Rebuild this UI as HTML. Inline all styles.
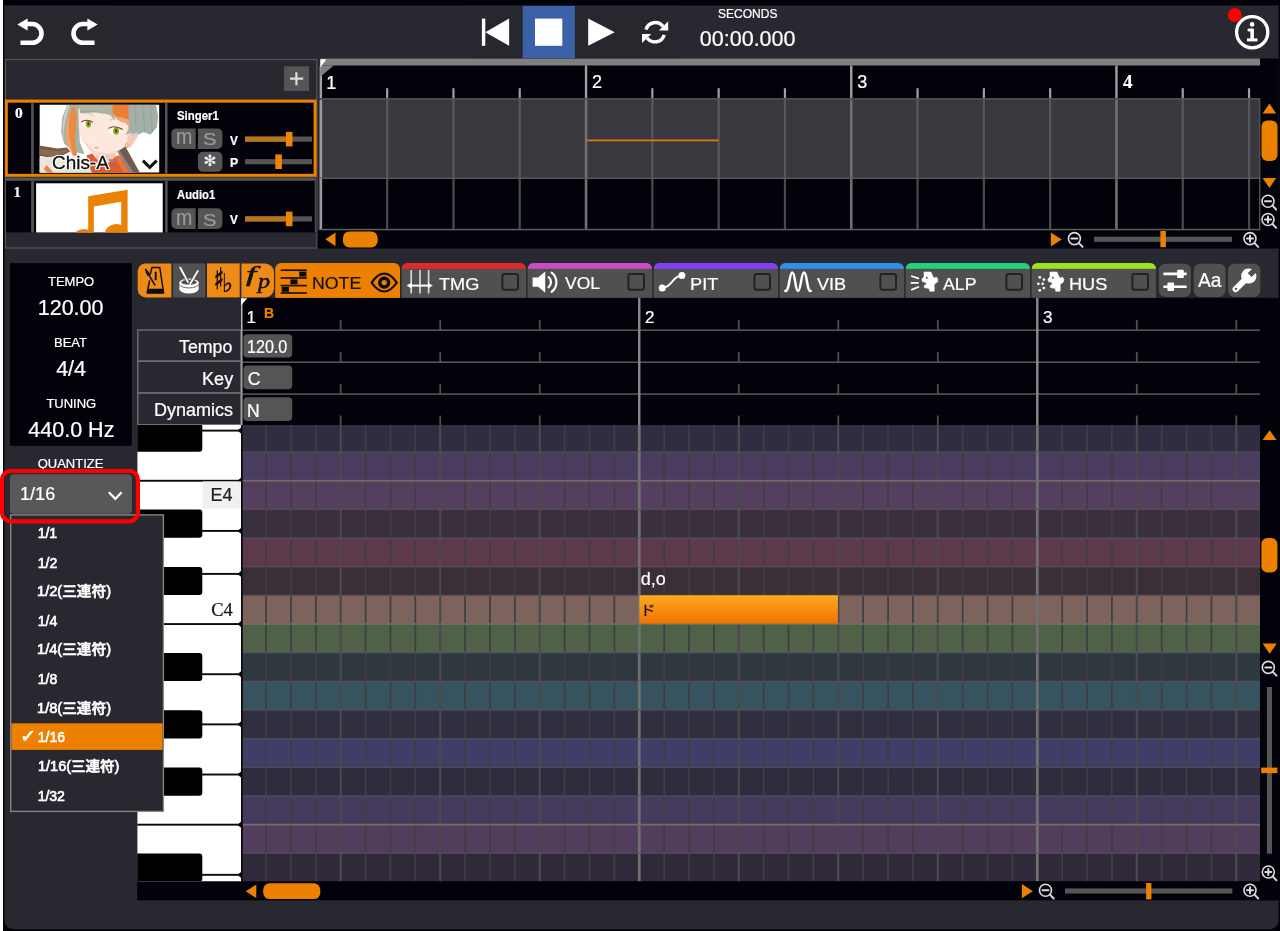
<!DOCTYPE html>
<html lang="ja"><head><meta charset="utf-8"><title>Vocal editor – Quantize menu</title>
<style>
html,body{margin:0;padding:0}
body{width:1280px;height:931px;position:relative;overflow:hidden;background:#02020b;font-family:"Liberation Sans", "Noto Sans CJK JP", sans-serif;}
#base{position:absolute;left:0;top:0}
header,section,#quantize-menu{position:absolute;overflow:visible;will-change:transform}
svg.g{position:absolute;left:0;top:0;overflow:visible}
.f-serif{font-family:"Liberation Serif", "Noto Serif CJK SC", serif}
.f-serifi{font-family:"Liberation Serif", serif;font-style:italic;-webkit-text-stroke:0.4px #111}
.f-dv{font-family:"DejaVu Sans", sans-serif}
.f-serifbi{font-family:"Liberation Serif", serif;font-style:italic;font-weight:700}
.t{position:absolute;white-space:nowrap;transform-origin:0 0;display:block;-webkit-text-stroke:0.22px currentColor}
.mi{-webkit-text-stroke:0.65px #fff}
#focus-ring{position:absolute;left:-2px;top:465px;width:146px;height:62px}
</style></head>
<body>
<svg id="base" width="1280" height="931" viewBox="0 0 1280 931"><rect x="0.00" y="0.00" width="1280.00" height="931.00" fill="#02020b"/><rect x="0.00" y="0.00" width="3.00" height="931.00" fill="#ffffff"/><path d="M4.50 5.50H1278.70V920.20A9 9 0 0 1 1269.70 929.20H13.50A9 9 0 0 1 4.50 920.20V5.50Z" fill="#282830"/></svg>
<header id="toolbar" style="left:0px;top:0px;width:1280px;height:59px">
<svg class="g" width="1280" height="59" viewBox="0 0 1280 59"><rect x="4.50" y="5.50" width="104.50" height="53.00" fill="#27272e"/><rect x="470.60" y="5.50" width="209.00" height="53.00" fill="#27272e"/><path d="M27 24H32.1A9.4 9.4 0 0 1 32.1 42.8H20.5" fill="none" stroke="#fff" stroke-width="4.6"/><path d="M17.3 24.6L27.6 18.6V30.6Z" fill="#fff"/><g transform="translate(115 0) scale(-1 1)"><path d="M27 24H32.1A9.4 9.4 0 0 1 32.1 42.8H20.5" fill="none" stroke="#fff" stroke-width="4.6"/><path d="M17.3 24.6L27.6 18.6V30.6Z" fill="#fff"/></g><rect x="522.70" y="6.00" width="52.20" height="52.50" fill="#3b61a9"/><rect x="481.90" y="18.60" width="3.40" height="27.20" fill="#fff"/><path d="M485.3 32.2L509.1 18.6V45.8Z" fill="#fff"/><rect x="535.00" y="18.60" width="27.30" height="27.20" fill="#fff"/><path d="M588.2 18.6V45.8L614.7 32.2Z" fill="#fff"/><g transform="translate(655 32.2) scale(0.95 0.93) translate(-655 -32.3)"><g fill="none" stroke="#fff" stroke-width="3.7"><path d="M645.6 29.5A10 10 0 0 1 663.5 26.2"/><path d="M664.6 35.1A10 10 0 0 1 646.7 38.4"/></g><path d="M668.9 20.6V30.4H659.1Z" fill="#fff"/><path d="M641.3 44V34.2H651.1Z" fill="#fff"/></g><circle cx="1252.2" cy="32.2" r="15.6" fill="none" stroke="#fff" stroke-width="3.3"/><circle cx="1252.1" cy="24.4" r="2.3" fill="#fff"/><rect x="1250.40" y="28.60" width="3.50" height="12.40" fill="#fff"/><rect x="1247.60" y="28.60" width="4.40" height="2.80" fill="#fff"/><rect x="1247.00" y="38.40" width="10.50" height="3.00" fill="#fff"/><circle cx="1234.8" cy="15" r="7" fill="#ff0000"/></svg>
<span class="t lbl" style="left:718.08px;top:8.24px;font-size:12px;line-height:12px;height:12px;color:#fff;">SECONDS</span>
<span class="t" style="left:699.83px;top:29.01px;font-size:21.5px;line-height:21.5px;height:21.5px;color:#fff;">00:00.000</span>
</header>
<section id="song" style="left:0px;top:59px;width:1280px;height:190px">
<svg class="g" width="1280" height="190" viewBox="0 59 1280 190"><rect x="320.30" y="58.50" width="958.40" height="189.80" fill="#02020b"/><rect x="316.90" y="230.20" width="961.80" height="18.10" fill="#02020b"/><rect x="320.30" y="58.50" width="939.70" height="7.00" fill="#808080"/><rect x="320.30" y="99.60" width="939.70" height="77.70" fill="#38383e"/><rect x="319.65" y="65.50" width="2.40" height="32.70" fill="#a0a0a0"/><rect x="319.55" y="99.60" width="2.60" height="130.40" fill="#9a9a9a"/><rect x="386.05" y="88.20" width="2.20" height="10.00" fill="#a0a0a0"/><rect x="386.05" y="99.60" width="2.20" height="77.70" fill="#58585c"/><rect x="386.05" y="177.30" width="2.20" height="52.70" fill="#4a4a4c"/><rect x="452.35" y="88.20" width="2.20" height="10.00" fill="#a0a0a0"/><rect x="452.35" y="99.60" width="2.20" height="77.70" fill="#58585c"/><rect x="452.35" y="177.30" width="2.20" height="52.70" fill="#4a4a4c"/><rect x="518.65" y="88.20" width="2.20" height="10.00" fill="#a0a0a0"/><rect x="518.65" y="99.60" width="2.20" height="77.70" fill="#58585c"/><rect x="518.65" y="177.30" width="2.20" height="52.70" fill="#4a4a4c"/><rect x="584.85" y="65.50" width="2.40" height="32.70" fill="#a0a0a0"/><rect x="584.75" y="99.60" width="2.60" height="130.40" fill="#707070"/><rect x="651.25" y="88.20" width="2.20" height="10.00" fill="#a0a0a0"/><rect x="651.25" y="99.60" width="2.20" height="77.70" fill="#58585c"/><rect x="651.25" y="177.30" width="2.20" height="52.70" fill="#4a4a4c"/><rect x="717.55" y="88.20" width="2.20" height="10.00" fill="#a0a0a0"/><rect x="717.55" y="99.60" width="2.20" height="77.70" fill="#58585c"/><rect x="717.55" y="177.30" width="2.20" height="52.70" fill="#4a4a4c"/><rect x="783.85" y="88.20" width="2.20" height="10.00" fill="#a0a0a0"/><rect x="783.85" y="99.60" width="2.20" height="77.70" fill="#58585c"/><rect x="783.85" y="177.30" width="2.20" height="52.70" fill="#4a4a4c"/><rect x="850.05" y="65.50" width="2.40" height="32.70" fill="#a0a0a0"/><rect x="849.95" y="99.60" width="2.60" height="130.40" fill="#707070"/><rect x="916.45" y="88.20" width="2.20" height="10.00" fill="#a0a0a0"/><rect x="916.45" y="99.60" width="2.20" height="77.70" fill="#58585c"/><rect x="916.45" y="177.30" width="2.20" height="52.70" fill="#4a4a4c"/><rect x="982.75" y="88.20" width="2.20" height="10.00" fill="#a0a0a0"/><rect x="982.75" y="99.60" width="2.20" height="77.70" fill="#58585c"/><rect x="982.75" y="177.30" width="2.20" height="52.70" fill="#4a4a4c"/><rect x="1049.05" y="88.20" width="2.20" height="10.00" fill="#a0a0a0"/><rect x="1049.05" y="99.60" width="2.20" height="77.70" fill="#58585c"/><rect x="1049.05" y="177.30" width="2.20" height="52.70" fill="#4a4a4c"/><rect x="1115.25" y="65.50" width="2.40" height="32.70" fill="#a0a0a0"/><rect x="1115.15" y="99.60" width="2.60" height="130.40" fill="#707070"/><rect x="1181.65" y="88.20" width="2.20" height="10.00" fill="#a0a0a0"/><rect x="1181.65" y="99.60" width="2.20" height="77.70" fill="#58585c"/><rect x="1181.65" y="177.30" width="2.20" height="52.70" fill="#4a4a4c"/><rect x="1247.95" y="88.20" width="2.20" height="10.00" fill="#a0a0a0"/><rect x="1247.95" y="99.60" width="2.20" height="77.70" fill="#58585c"/><rect x="1247.95" y="177.30" width="2.20" height="52.70" fill="#4a4a4c"/><rect x="1259.00" y="99.60" width="1.40" height="130.40" fill="#505052"/><rect x="320.30" y="98.20" width="940.10" height="1.50" fill="#606060"/><rect x="320.30" y="177.30" width="940.10" height="1.60" fill="#606060"/><rect x="320.30" y="228.80" width="940.10" height="1.50" fill="#606060"/><path d="M320.3 65.5H333.8L320.3 76.8Z" fill="#808080"/><path d="M320.3 59.2H326.4L320.3 67.6Z" fill="#fff"/><rect x="586.60" y="139.50" width="131.90" height="1.80" fill="#d87a10"/><path d="M1262.6 113.6L1269.4 103.6L1276.2 113.6Z" fill="#ee8000"/><rect x="1261.50" y="120.60" width="16.00" height="40.40" rx="6" fill="#ee8000"/><path d="M1262.6 178L1276.2 178L1269.4 188Z" fill="#ee8000"/><g stroke="#dcdcdc" fill="none" stroke-linecap="round"><circle cx="1268" cy="201.2" r="6.0" stroke-width="1.6"/><path d="M1272.50 205.70L1276.20 209.50" stroke-width="1.9"/><path d="M1265.00 201.2H1271.00" stroke-width="2"/></g><g stroke="#dcdcdc" fill="none" stroke-linecap="round"><circle cx="1268" cy="219.5" r="6.0" stroke-width="1.6"/><path d="M1272.50 224.00L1276.20 227.80" stroke-width="1.9"/><path d="M1265.00 219.5H1271.00" stroke-width="2"/><path d="M1268 216.50V222.50" stroke-width="2"/></g><path d="M335.5 232.4V246.3L325.3 239.35Z" fill="#ee8000"/><rect x="342.90" y="231.40" width="34.80" height="16.00" rx="6.5" fill="#ee8000"/><path d="M1050.8 232.6V246.4L1061.7 239.5Z" fill="#ee8000"/><g stroke="#dcdcdc" fill="none" stroke-linecap="round"><circle cx="1074.4" cy="238.6" r="6.0" stroke-width="1.6"/><path d="M1078.90 243.10L1082.60 246.90" stroke-width="1.9"/><path d="M1071.40 238.6H1077.40" stroke-width="2"/></g><rect x="1094.00" y="236.70" width="138.00" height="5.20" fill="#555"/><rect x="1160.40" y="231.00" width="5.50" height="16.20" fill="#ee8000"/><g stroke="#dcdcdc" fill="none" stroke-linecap="round"><circle cx="1250" cy="238.6" r="6.0" stroke-width="1.6"/><path d="M1254.50 243.10L1258.20 246.90" stroke-width="1.9"/><path d="M1247.00 238.6H1253.00" stroke-width="2"/><path d="M1250 235.60V241.60" stroke-width="2"/></g><rect x="5.50" y="59.50" width="311.30" height="188.50" fill="#282830" stroke="#555" stroke-width="1.2"/><rect x="284.00" y="66.30" width="25.00" height="24.60" fill="#555"/><path d="M290 78.6H303.2M296.4 72.2V85.2" stroke="#dcdcdc" stroke-width="2.2" fill="none"/><rect x="5.00" y="99.60" width="311.60" height="77.20" fill="#ee8000"/><rect x="7.80" y="102.70" width="305.80" height="71.10" fill="#02020b"/><rect x="31.20" y="102.70" width="2.50" height="71.10" fill="#555"/><rect x="165.00" y="102.70" width="2.50" height="71.10" fill="#555"/><rect x="6.00" y="177.40" width="310.60" height="55.00" fill="#02020b"/><rect x="5.50" y="177.40" width="311.10" height="3.40" fill="#555"/><rect x="314.70" y="180.80" width="2.00" height="51.60" fill="#484848"/><rect x="31.20" y="180.80" width="2.70" height="51.60" fill="#555"/><rect x="165.20" y="180.80" width="2.40" height="51.60" fill="#555"/><rect x="36.10" y="183.30" width="126.60" height="49.10" fill="#fff"/><clipPath id="c1"><rect x="36.1" y="183.3" width="126.6" height="49.1"/></clipPath><g clip-path="url(#c1)" fill="#ea8206"><path d="M88.2 196.3L127.6 189.8V235H121.2V201.8L93.8 206.5V240H88.2Z"/><ellipse cx="84" cy="238" rx="11.5" ry="9"/><ellipse cx="116.5" cy="233.6" rx="11.5" ry="9.6"/></g><path d="M176.40 128.40H195.70V149.00H176.40A5 5 0 0 1 171.40 144.00V133.40A5 5 0 0 1 176.40 128.40Z" fill="#555"/><path d="M197.90 128.40H217.40A5 5 0 0 1 222.40 133.40V144.00A5 5 0 0 1 217.40 149.00H197.90V128.40Z" fill="#555"/><rect x="197.90" y="151.80" width="24.50" height="19.90" rx="5" fill="#555"/><rect x="245.00" y="136.55" width="67.00" height="5.20" fill="#555"/><rect x="245.00" y="136.55" width="44.20" height="5.20" fill="#b8741f"/><rect x="285.90" y="131.85" width="6.60" height="14.60" fill="#f08300"/><rect x="245.00" y="159.10" width="67.00" height="5.20" fill="#555"/><rect x="275.30" y="154.40" width="6.60" height="14.60" fill="#f08300"/><path d="M176.40 208.20H195.70V229.00H176.40A5 5 0 0 1 171.40 224.00V213.20A5 5 0 0 1 176.40 208.20Z" fill="#555"/><path d="M197.90 208.20H217.40A5 5 0 0 1 222.40 213.20V224.00A5 5 0 0 1 217.40 229.00H197.90V208.20Z" fill="#555"/><rect x="245.00" y="216.30" width="67.00" height="5.20" fill="#555"/><rect x="245.00" y="216.30" width="44.20" height="5.20" fill="#b8741f"/><rect x="285.90" y="211.60" width="6.60" height="14.60" fill="#f08300"/><clipPath id="c0"><rect x="39.7" y="104.7" width="119.5" height="67.9"/></clipPath>
<g clip-path="url(#c0)"><g transform="translate(38 103) scale(0.0969)">
<rect x="0" y="0" width="1280" height="743" fill="#fff"/>
<path d="M300 18L1215 18L1238 140L1225 250L1160 325L1090 300L1020 330L900 360L900 60L420 60L430 400L480 530L400 510L330 470L270 420L238 300L250 150Z" fill="#a6b2a7"/>
<path d="M330 18L290 150L262 300L275 400L250 300L262 150L300 18Z" fill="#c9cfbf"/>
<path d="M352 40L302 200L286 330L312 440L362 545L405 545L384 440L386 300L402 150L384 40Z" fill="#ee8a40"/>
<path d="M352 40L322 160L318 330L345 460L362 545L312 440L286 330L302 200Z" fill="#f4a466"/>
<path d="M420 60L905 60L935 260L905 330L962 310L942 420L800 525L690 565L600 545L520 472L452 380L420 250Z" fill="#fde8dd"/>
<path d="M452 380L520 472L600 545L690 565L800 525L850 480L720 520L600 500L500 420Z" fill="#f9d8c8"/>
<path d="M600 545L800 525L830 600L700 630L590 600Z" fill="#f1c7b3"/>
<path d="M420 18L780 18L792 172L742 122L600 96L440 102Z" fill="#aeb3a5"/>
<path d="M440 102L600 96L742 122L792 172L780 140L600 80L430 86Z" fill="#8f9d94" opacity=".6"/>
<path d="M768 18L936 18L942 244L902 204L852 192L800 142L772 100Z" fill="#ec7f34"/>
<path d="M800 142L852 192L902 204L942 244L938 170L860 150Z" fill="#f4a878"/>
<path d="M934 18L1215 18L1238 140L1225 250L1160 325L1090 300L1020 330L962 302L940 244Z" fill="#a3b0a6"/>
<path d="M1000 18L1010 250M1080 18L1100 290M1160 18L1180 300" stroke="#8d9c94" stroke-width="14" fill="none" opacity=".55"/>
<path d="M930 332L1012 306L1032 340L962 452L900 472Z" fill="#f5c9b3"/>
<path d="M960 330L1025 305L1035 335L990 350Z" fill="#d9c6e2"/>
<circle cx="915" cy="436" r="15" fill="#fff" stroke="#df7c3c" stroke-width="9"/>
<ellipse cx="503" cy="216" rx="52" ry="38" fill="#fff"/><ellipse cx="520" cy="216" rx="29" ry="37" fill="#93ab20"/><ellipse cx="521" cy="214" rx="10" ry="19" fill="#46530f"/>
<path d="M448 196Q500 158 566 198" stroke="#6a4636" stroke-width="11" fill="none"/>
<ellipse cx="790" cy="288" rx="60" ry="42" fill="#fff"/><ellipse cx="806" cy="288" rx="31" ry="39" fill="#93ab20"/><ellipse cx="807" cy="286" rx="11" ry="20" fill="#46530f"/>
<path d="M728 262Q790 222 874 274" stroke="#6a4636" stroke-width="11" fill="none"/>
<path d="M440 104Q520 96 572 132" stroke="#9aa79c" stroke-width="6" fill="none"/><path d="M738 178Q800 150 850 168" stroke="#9aa79c" stroke-width="6" fill="none"/>
<ellipse cx="603" cy="462" rx="24" ry="8" fill="#e59d8f"/><circle cx="577" cy="361" r="8" fill="#fff"/>
<path d="M0 436L200 470L300 460L332 500L252 542L120 562L0 542Z" fill="#7a5743"/>
<path d="M0 470L210 495L300 480L318 500L250 530L120 548L0 530Z" fill="#8c6a55"/>
<path d="M0 562L250 546L360 560L520 600L570 743L0 743Z" fill="#ebe6db"/>
<path d="M0 690L560 680L570 743L0 743Z" fill="#dfe6d3"/>
<path d="M90 640L160 720L120 743L60 680Z" fill="#e8804a"/>
<path d="M500 542L562 520L622 600L700 642L792 562L832 540L1000 743L560 743Z" fill="#dc5c2e"/>
<path d="M792 562L832 540L1000 743L900 743Z" fill="#e8743f"/>
<path d="M735 578L800 588L796 606L732 598Z" fill="#8f84b8"/>
<path d="M820 500L902 450L1064 743L962 743Z" fill="#6e5b51"/>
<path d="M820 500L840 488L1000 743L962 743Z" fill="#93857c"/>
</g></g><path d="M142.9 160.6L149.8 167.3L156.7 160.6" fill="none" stroke="#111" stroke-width="3"/></svg>
<span class="t" style="left:326.27px;top:14.76px;font-size:18px;line-height:18px;height:18px;color:#fff;">1</span>
<span class="t" style="left:591.92px;top:14.20px;font-size:18px;line-height:18px;height:18px;color:#fff;">2</span>
<span class="t" style="left:857.20px;top:14.31px;font-size:18px;line-height:18px;height:18px;color:#fff;">3</span>
<span class="t f-serif" style="left:1123.01px;top:13.30px;font-size:19px;line-height:19px;height:19px;color:#fff;font-weight:700;">4</span>
<span class="t" style="left:52.37px;top:94.99px;font-size:18px;line-height:18px;height:18px;color:#111;transform:scaleX(1.0508);text-shadow:1px 0 0 #fff,-1px 0 0 #fff,0 1px 0 #fff,0 -1px 0 #fff,1px 1px 0 #fff,-1px -1px 0 #fff,1px -1px 0 #fff,-1px 1px 0 #fff,0 0 2px #fff;-webkit-text-stroke:0.3px #111;">Chis-A</span>
<span class="t f-serif" style="left:14.78px;top:47.90px;font-size:14px;line-height:14px;height:14px;color:#fff;font-weight:700;transform:scaleX(1.1054);">0</span>
<span class="t f-serif" style="left:13.68px;top:127.33px;font-size:14px;line-height:14px;height:14px;color:#fff;font-weight:700;">1</span>
<span class="t" style="left:176.65px;top:49.62px;font-size:13px;line-height:13px;height:13px;color:#fff;font-weight:700;transform:scaleX(0.8779);">Singer1</span>
<span class="t" style="left:177.07px;top:128.71px;font-size:13px;line-height:13px;height:13px;color:#fff;font-weight:700;transform:scaleX(0.8660);">Audio1</span>
<span class="t" style="left:229.93px;top:74.99px;font-size:13px;line-height:13px;height:13px;color:#fff;font-weight:700;transform:scaleX(0.9043);">V</span>
<span class="t" style="left:229.93px;top:153.99px;font-size:13px;line-height:13px;height:13px;color:#fff;font-weight:700;transform:scaleX(0.9043);">V</span>
<span class="t" style="left:229.54px;top:97.27px;font-size:13px;line-height:13px;height:13px;color:#fff;font-weight:700;transform:scaleX(0.9447);">P</span>
<span class="t" style="left:175.81px;top:68.36px;font-size:21.5px;line-height:21.5px;height:21.5px;color:#9a9a9a;transform:scaleX(0.9104);">m</span>
<span class="t" style="left:203.45px;top:72.90px;font-size:15.8px;line-height:15.8px;height:15.8px;color:#9a9a9a;transform:scaleX(1.2768);">S</span>
<span class="t" style="left:175.81px;top:148.96px;font-size:21.5px;line-height:21.5px;height:21.5px;color:#9a9a9a;transform:scaleX(0.9104);">m</span>
<span class="t" style="left:203.45px;top:153.50px;font-size:15.8px;line-height:15.8px;height:15.8px;color:#9a9a9a;transform:scaleX(1.2768);">S</span>
<span class="t f-dv" style="left:203.47px;top:95.37px;font-size:15.4px;line-height:15.4px;height:15.4px;color:#f0f0f0;">✻</span>
</section>
<section id="editor" style="left:0px;top:249px;width:1280px;height:682px">
<svg class="g" width="1280" height="682" viewBox="0 249 1280 682"><rect x="9.90" y="263.20" width="121.90" height="182.60" fill="#02020b"/><rect x="9.90" y="474.30" width="122.10" height="39.40" rx="4" fill="#585858"/><path d="M108.9 492.2L115.3 498.8L121.7 492.2" fill="none" stroke="#fff" stroke-width="2.2"/><path d="M145.70 263.40H171.40V297.40H145.70A8 8 0 0 1 137.70 289.40V271.40A8 8 0 0 1 145.70 263.40Z" fill="#ee8a16"/><rect x="173.10" y="263.40" width="32.10" height="34.00" fill="#515151"/><rect x="207.00" y="263.40" width="32.70" height="34.00" fill="#ee8a16"/><path d="M241.40 263.40H265.00A9 9 0 0 1 274.00 272.40V288.40A9 9 0 0 1 265.00 297.40H241.40V263.40Z" fill="#ee8a16"/><g fill="none" stroke="#111" stroke-width="1.5" stroke-linejoin="round"><path d="M150.2 274.6L151.9 267.5H159.8L163.6 293H147.2L149.6 280.4"/></g><path d="M148 288.7H163L163.7 293.2H147.1Z" fill="#0a0a0a"/><path d="M155.7 271.8V280.2" stroke="#111" stroke-width="1.9"/><path d="M145.3 269L155.1 285.4" stroke="#111" stroke-width="1.6"/><path d="M146.6 271.2L149 275.2" stroke="#111" stroke-width="3"/><g><ellipse cx="189" cy="289" rx="9.6" ry="4.6" fill="#fff"/><rect x="179.4" y="282.4" width="19.2" height="6.6" fill="#fff"/><ellipse cx="189" cy="282.4" rx="9.6" ry="3.8" fill="#fff"/><path d="M179.6 284.6A9.5 3.9 0 0 0 198.4 284.6" fill="none" stroke="#6a6a6a" stroke-width="1"/><ellipse cx="189" cy="282.2" rx="7.7" ry="2.4" fill="#505050"/><path d="M180.3 267.7L187.9 281.9" stroke="#505050" stroke-width="3.6"/><path d="M197.8 270.9L190.1 284.1" stroke="#505050" stroke-width="3.6"/><path d="M180.3 267.7L187.9 281.9" stroke="#fff" stroke-width="1.9" stroke-linecap="round"/><path d="M197.8 270.9L190.1 284.1" stroke="#f4f4f4" stroke-width="1.9" stroke-linecap="round"/></g><path d="M281.20 262.90H394.00A6 6 0 0 1 400.00 268.90V297.90H275.20V268.90A6 6 0 0 1 281.20 262.90Z" fill="#ee8000"/><rect x="280.60" y="269.35" width="26.30" height="1.70" fill="#1c1000"/><rect x="280.60" y="277.15" width="26.30" height="1.70" fill="#1c1000"/><rect x="280.60" y="284.75" width="26.30" height="1.70" fill="#1c1000"/><rect x="280.60" y="292.15" width="26.30" height="1.70" fill="#1c1000"/><rect x="299.20" y="271.60" width="7.20" height="5.00" fill="#0a0a0a"/><rect x="290.40" y="279.40" width="7.10" height="4.90" fill="#0a0a0a"/><rect x="281.70" y="286.90" width="7.30" height="4.90" fill="#0a0a0a"/><path d="M371.6 282.6Q384.2 264.8 396.8 282.6Q384.2 300.4 371.6 282.6Z" fill="none" stroke="#111" stroke-width="2.2" stroke-linejoin="round"/><circle cx="384.2" cy="282.6" r="4.45" fill="none" stroke="#0a0a0a" stroke-width="3.5"/><path d="M407.60 263.00H520.10A6 6 0 0 1 526.10 269.00V297.90H401.60V269.00A6 6 0 0 1 407.60 263.00Z" fill="#505050"/><clipPath id="tc0"><path d="M407.60 263.00H520.10A6 6 0 0 1 526.10 269.00V297.90H401.60V269.00A6 6 0 0 1 407.60 263.00Z"/></clipPath><rect x="401.60" y="262.50" width="124.50" height="6.30" fill="#e02a2a" clip-path="url(#tc0)"/><rect x="502.40" y="274.10" width="15.60" height="15.60" rx="2" fill="none" stroke="#222" stroke-width="2"/><path d="M533.60 263.00H646.10A6 6 0 0 1 652.10 269.00V297.90H527.60V269.00A6 6 0 0 1 533.60 263.00Z" fill="#505050"/><clipPath id="tc1"><path d="M533.60 263.00H646.10A6 6 0 0 1 652.10 269.00V297.90H527.60V269.00A6 6 0 0 1 533.60 263.00Z"/></clipPath><rect x="527.60" y="262.50" width="124.50" height="6.30" fill="#c84cc8" clip-path="url(#tc1)"/><rect x="628.40" y="274.10" width="15.60" height="15.60" rx="2" fill="none" stroke="#222" stroke-width="2"/><path d="M659.60 263.00H772.10A6 6 0 0 1 778.10 269.00V297.90H653.60V269.00A6 6 0 0 1 659.60 263.00Z" fill="#505050"/><clipPath id="tc2"><path d="M659.60 263.00H772.10A6 6 0 0 1 778.10 269.00V297.90H653.60V269.00A6 6 0 0 1 659.60 263.00Z"/></clipPath><rect x="653.60" y="262.50" width="124.50" height="6.30" fill="#8040f6" clip-path="url(#tc2)"/><rect x="754.40" y="274.10" width="15.60" height="15.60" rx="2" fill="none" stroke="#222" stroke-width="2"/><path d="M785.60 263.00H898.10A6 6 0 0 1 904.10 269.00V297.90H779.60V269.00A6 6 0 0 1 785.60 263.00Z" fill="#505050"/><clipPath id="tc3"><path d="M785.60 263.00H898.10A6 6 0 0 1 904.10 269.00V297.90H779.60V269.00A6 6 0 0 1 785.60 263.00Z"/></clipPath><rect x="779.60" y="262.50" width="124.50" height="6.30" fill="#2e90e8" clip-path="url(#tc3)"/><rect x="880.40" y="274.10" width="15.60" height="15.60" rx="2" fill="none" stroke="#222" stroke-width="2"/><path d="M911.60 263.00H1024.10A6 6 0 0 1 1030.10 269.00V297.90H905.60V269.00A6 6 0 0 1 911.60 263.00Z" fill="#505050"/><clipPath id="tc4"><path d="M911.60 263.00H1024.10A6 6 0 0 1 1030.10 269.00V297.90H905.60V269.00A6 6 0 0 1 911.60 263.00Z"/></clipPath><rect x="905.60" y="262.50" width="124.50" height="6.30" fill="#24d07c" clip-path="url(#tc4)"/><rect x="1006.40" y="274.10" width="15.60" height="15.60" rx="2" fill="none" stroke="#222" stroke-width="2"/><path d="M1037.60 263.00H1150.10A6 6 0 0 1 1156.10 269.00V297.90H1031.60V269.00A6 6 0 0 1 1037.60 263.00Z" fill="#505050"/><clipPath id="tc5"><path d="M1037.60 263.00H1150.10A6 6 0 0 1 1156.10 269.00V297.90H1031.60V269.00A6 6 0 0 1 1037.60 263.00Z"/></clipPath><rect x="1031.60" y="262.50" width="124.50" height="6.30" fill="#9ce420" clip-path="url(#tc5)"/><rect x="1132.40" y="274.10" width="15.60" height="15.60" rx="2" fill="none" stroke="#222" stroke-width="2"/><g stroke="#d8d8d8" stroke-width="1.7" fill="none"><path d="M411.2 270V293.5M420 270V293.5M428.6 270V293.5"/></g><path d="M410 285.6H429.5" stroke="#fff" stroke-width="2"/><path d="M406.6 285.6L411.4 282.8V288.4Z M432.8 285.6L428 282.8V288.4Z" fill="#fff"/><path d="M532.6 277.6H538.2L545.2 271.6V292.8L538.2 286.8H532.6Z" fill="#fff"/><g fill="none" stroke="#fff" stroke-width="2.2" stroke-linecap="round"><path d="M548.6 277.2A6.5 6.5 0 0 1 548.6 287.2"/><path d="M551.6 272.6A12 12 0 0 1 551.6 291.8"/></g><circle cx="662.2" cy="287.9" r="3.5" fill="#fff"/><circle cx="681.9" cy="275.6" r="3.5" fill="#fff"/><path d="M662.2 287.9C672 287.9 672 275.6 681.9 275.6" fill="none" stroke="#fff" stroke-width="2"/><path d="M785.3 291.1C789.6 291.1 789.2 272.5 792.3 272.5C795.4 272.5 795 291.1 798 291.1C801 291.1 801 272.5 804.1 272.5C807.2 272.5 806.6 291.1 810.7 291.1" fill="none" stroke="#fff" stroke-width="2.5" stroke-linecap="round"/><g transform="translate(904 262) scale(0.0408)"><path d="M490 245L660 245L700 340L740 400L790 365L830 420L820 490L760 530L740 560L740 715L630 715L620 650L560 640L500 625L490 590L550 540L540 505L450 480L440 420L490 360Z" fill="#fff" stroke="#fff" stroke-width="14" stroke-linejoin="round"/><circle cx="560" cy="385" r="24" fill="#505050"/></g><g stroke="#fff" stroke-width="1.7" stroke-linecap="round"><path d="M911.8 276.2L918.4 278.4M911.4 282.8H918M911.8 289.6L918.4 287"/></g><g transform="translate(1030 262) scale(0.0408)"><path d="M490 245L660 245L700 340L740 400L790 365L830 420L820 490L760 530L740 560L740 715L630 715L620 650L560 640L500 625L490 590L550 540L540 505L450 480L440 420L490 360Z" fill="#fff" stroke="#fff" stroke-width="14" stroke-linejoin="round"/><circle cx="560" cy="385" r="24" fill="#505050"/></g><g transform="translate(1030 262) scale(0.0408)" fill="#fff"><circle cx="240" cy="375" r="33"/><circle cx="340" cy="430" r="33"/><circle cx="205" cy="535" r="33"/><circle cx="310" cy="535" r="33"/><circle cx="340" cy="640" r="33"/><circle cx="240" cy="695" r="33"/></g><rect x="1158.80" y="263.70" width="32.10" height="33.30" rx="6.5" fill="#505050"/><rect x="1193.60" y="263.70" width="31.90" height="33.30" rx="6.5" fill="#505050"/><rect x="1228.00" y="263.70" width="32.30" height="33.30" rx="6.5" fill="#505050"/><rect x="1163.20" y="272.60" width="23.60" height="2.60" rx="1.2" fill="#fff"/><rect x="1163.20" y="285.50" width="23.60" height="2.60" rx="1.2" fill="#fff"/><rect x="1177.10" y="269.70" width="6.70" height="8.40" rx="1.2" fill="#fff"/><rect x="1167.40" y="282.60" width="6.70" height="8.40" rx="1.2" fill="#fff"/><g transform="translate(1248.8 276) rotate(45)" fill="#fff"><path d="M-2.7 -7.1A7.6 7.6 0 1 0 2.7 -7.1V-1.2H-2.7Z"/><path d="M-3.1 4V18.6A3.1 3.1 0 0 0 3.1 18.6V4Z"/><circle cx="0" cy="18.2" r="1.15" fill="#505050"/></g><rect x="241.00" y="297.90" width="1037.60" height="127.30" fill="#02020b"/><rect x="137.20" y="425.00" width="1141.40" height="475.30" fill="#02020b"/><rect x="1259.80" y="297.90" width="18.80" height="602.40" fill="#02020b"/><clipPath id="gc"><rect x="242.5" y="425.1" width="1017.5" height="456.19999999999993"/></clipPath><g clip-path="url(#gc)"><rect x="242.50" y="423.44" width="1017.50" height="28.96" fill="#2f2d3f"/><rect x="242.50" y="452.10" width="1017.50" height="28.96" fill="#493c5f"/><rect x="242.50" y="480.76" width="1017.50" height="28.96" fill="#543f5f"/><rect x="242.50" y="509.42" width="1017.50" height="28.96" fill="#392f3d"/><rect x="242.50" y="538.08" width="1017.50" height="28.96" fill="#5c394b"/><rect x="242.50" y="566.74" width="1017.50" height="28.96" fill="#3a2f37"/><rect x="242.50" y="595.40" width="1017.50" height="28.96" fill="#7e635d"/><rect x="242.50" y="624.06" width="1017.50" height="28.96" fill="#4f6147"/><rect x="242.50" y="652.72" width="1017.50" height="28.96" fill="#2f373f"/><rect x="242.50" y="681.38" width="1017.50" height="28.96" fill="#37535f"/><rect x="242.50" y="710.04" width="1017.50" height="28.96" fill="#2f2f3f"/><rect x="242.50" y="738.70" width="1017.50" height="28.96" fill="#403d66"/><rect x="242.50" y="767.36" width="1017.50" height="28.96" fill="#2f2d3d"/><rect x="242.50" y="796.02" width="1017.50" height="28.96" fill="#473b5d"/><rect x="242.50" y="824.68" width="1017.50" height="28.96" fill="#513e5c"/><rect x="242.50" y="853.34" width="1017.50" height="28.96" fill="#30293a"/><rect x="239.80" y="425.10" width="2.80" height="456.20" fill="#707070"/><rect x="265.23" y="425.10" width="1.70" height="456.20" fill="#403d43"/><rect x="290.11" y="425.10" width="1.70" height="456.20" fill="#403d43"/><rect x="314.98" y="425.10" width="1.70" height="456.20" fill="#403d43"/><rect x="339.61" y="425.10" width="2.20" height="456.20" fill="#4b494d"/><rect x="364.74" y="425.10" width="1.70" height="456.20" fill="#403d43"/><rect x="389.62" y="425.10" width="1.70" height="456.20" fill="#403d43"/><rect x="414.50" y="425.10" width="1.70" height="456.20" fill="#403d43"/><rect x="439.12" y="425.10" width="2.20" height="456.20" fill="#4b494d"/><rect x="464.25" y="425.10" width="1.70" height="456.20" fill="#403d43"/><rect x="489.13" y="425.10" width="1.70" height="456.20" fill="#403d43"/><rect x="514.01" y="425.10" width="1.70" height="456.20" fill="#403d43"/><rect x="538.64" y="425.10" width="2.20" height="456.20" fill="#4b494d"/><rect x="563.77" y="425.10" width="1.70" height="456.20" fill="#403d43"/><rect x="588.64" y="425.10" width="1.70" height="456.20" fill="#403d43"/><rect x="613.52" y="425.10" width="1.70" height="456.20" fill="#403d43"/><rect x="637.85" y="425.10" width="2.80" height="456.20" fill="#707070"/><rect x="663.28" y="425.10" width="1.70" height="456.20" fill="#403d43"/><rect x="688.16" y="425.10" width="1.70" height="456.20" fill="#403d43"/><rect x="713.03" y="425.10" width="1.70" height="456.20" fill="#403d43"/><rect x="737.66" y="425.10" width="2.20" height="456.20" fill="#4b494d"/><rect x="762.79" y="425.10" width="1.70" height="456.20" fill="#403d43"/><rect x="787.67" y="425.10" width="1.70" height="456.20" fill="#403d43"/><rect x="812.55" y="425.10" width="1.70" height="456.20" fill="#403d43"/><rect x="837.18" y="425.10" width="2.20" height="456.20" fill="#4b494d"/><rect x="862.30" y="425.10" width="1.70" height="456.20" fill="#403d43"/><rect x="887.18" y="425.10" width="1.70" height="456.20" fill="#403d43"/><rect x="912.06" y="425.10" width="1.70" height="456.20" fill="#403d43"/><rect x="936.69" y="425.10" width="2.20" height="456.20" fill="#4b494d"/><rect x="961.82" y="425.10" width="1.70" height="456.20" fill="#403d43"/><rect x="986.69" y="425.10" width="1.70" height="456.20" fill="#403d43"/><rect x="1011.57" y="425.10" width="1.70" height="456.20" fill="#403d43"/><rect x="1035.90" y="425.10" width="2.80" height="456.20" fill="#707070"/><rect x="1061.33" y="425.10" width="1.70" height="456.20" fill="#403d43"/><rect x="1086.21" y="425.10" width="1.70" height="456.20" fill="#403d43"/><rect x="1111.08" y="425.10" width="1.70" height="456.20" fill="#403d43"/><rect x="1135.71" y="425.10" width="2.20" height="456.20" fill="#4b494d"/><rect x="1160.84" y="425.10" width="1.70" height="456.20" fill="#403d43"/><rect x="1185.72" y="425.10" width="1.70" height="456.20" fill="#403d43"/><rect x="1210.60" y="425.10" width="1.70" height="456.20" fill="#403d43"/><rect x="1235.23" y="425.10" width="2.20" height="456.20" fill="#4b494d"/><rect x="242.50" y="451.40" width="1017.50" height="1.40" fill="#5a5560" opacity="0.7"/><rect x="242.50" y="479.86" width="1017.50" height="1.80" fill="#6c6c6c"/><rect x="242.50" y="508.72" width="1017.50" height="1.40" fill="#5a5560" opacity="0.7"/><rect x="242.50" y="537.38" width="1017.50" height="1.40" fill="#5a5560" opacity="0.7"/><rect x="242.50" y="566.04" width="1017.50" height="1.40" fill="#5a5560" opacity="0.7"/><rect x="242.50" y="594.70" width="1017.50" height="1.40" fill="#5a5560" opacity="0.7"/><rect x="242.50" y="623.16" width="1017.50" height="1.80" fill="#6c6c6c"/><rect x="242.50" y="652.02" width="1017.50" height="1.40" fill="#5a5560" opacity="0.7"/><rect x="242.50" y="680.68" width="1017.50" height="1.40" fill="#5a5560" opacity="0.7"/><rect x="242.50" y="709.34" width="1017.50" height="1.40" fill="#5a5560" opacity="0.7"/><rect x="242.50" y="738.00" width="1017.50" height="1.40" fill="#5a5560" opacity="0.7"/><rect x="242.50" y="766.66" width="1017.50" height="1.40" fill="#5a5560" opacity="0.7"/><rect x="242.50" y="795.32" width="1017.50" height="1.40" fill="#5a5560" opacity="0.7"/><rect x="242.50" y="823.78" width="1017.50" height="1.80" fill="#6c6c6c"/><rect x="242.50" y="852.64" width="1017.50" height="1.40" fill="#5a5560" opacity="0.7"/></g><linearGradient id="ng" x1="0" y1="0" x2="0" y2="1"><stop offset="0" stop-color="#ffaa22"/><stop offset="1" stop-color="#f07200"/></linearGradient><rect x="639.30" y="595.30" width="198.60" height="28.30" fill="url(#ng)"/><rect x="242.40" y="329.40" width="1017.60" height="1.60" fill="#555"/><rect x="242.40" y="361.40" width="1017.60" height="1.60" fill="#555"/><rect x="242.40" y="393.30" width="1017.60" height="1.60" fill="#555"/><rect x="339.81" y="320.00" width="1.80" height="10.00" fill="#4e4e4e"/><rect x="339.81" y="352.00" width="1.80" height="10.00" fill="#4e4e4e"/><rect x="339.81" y="384.00" width="1.80" height="10.00" fill="#4e4e4e"/><rect x="339.81" y="415.60" width="1.80" height="9.60" fill="#4e4e4e"/><rect x="439.33" y="320.00" width="1.80" height="10.00" fill="#4e4e4e"/><rect x="439.33" y="352.00" width="1.80" height="10.00" fill="#4e4e4e"/><rect x="439.33" y="384.00" width="1.80" height="10.00" fill="#4e4e4e"/><rect x="439.33" y="415.60" width="1.80" height="9.60" fill="#4e4e4e"/><rect x="538.84" y="320.00" width="1.80" height="10.00" fill="#4e4e4e"/><rect x="538.84" y="352.00" width="1.80" height="10.00" fill="#4e4e4e"/><rect x="538.84" y="384.00" width="1.80" height="10.00" fill="#4e4e4e"/><rect x="538.84" y="415.60" width="1.80" height="9.60" fill="#4e4e4e"/><rect x="638.05" y="297.90" width="2.40" height="127.20" fill="#8a8a8a"/><rect x="737.86" y="320.00" width="1.80" height="10.00" fill="#4e4e4e"/><rect x="737.86" y="352.00" width="1.80" height="10.00" fill="#4e4e4e"/><rect x="737.86" y="384.00" width="1.80" height="10.00" fill="#4e4e4e"/><rect x="737.86" y="415.60" width="1.80" height="9.60" fill="#4e4e4e"/><rect x="837.38" y="320.00" width="1.80" height="10.00" fill="#4e4e4e"/><rect x="837.38" y="352.00" width="1.80" height="10.00" fill="#4e4e4e"/><rect x="837.38" y="384.00" width="1.80" height="10.00" fill="#4e4e4e"/><rect x="837.38" y="415.60" width="1.80" height="9.60" fill="#4e4e4e"/><rect x="936.89" y="320.00" width="1.80" height="10.00" fill="#4e4e4e"/><rect x="936.89" y="352.00" width="1.80" height="10.00" fill="#4e4e4e"/><rect x="936.89" y="384.00" width="1.80" height="10.00" fill="#4e4e4e"/><rect x="936.89" y="415.60" width="1.80" height="9.60" fill="#4e4e4e"/><rect x="1036.10" y="297.90" width="2.40" height="127.20" fill="#8a8a8a"/><rect x="1135.91" y="320.00" width="1.80" height="10.00" fill="#4e4e4e"/><rect x="1135.91" y="352.00" width="1.80" height="10.00" fill="#4e4e4e"/><rect x="1135.91" y="384.00" width="1.80" height="10.00" fill="#4e4e4e"/><rect x="1135.91" y="415.60" width="1.80" height="9.60" fill="#4e4e4e"/><rect x="1235.42" y="320.00" width="1.80" height="10.00" fill="#4e4e4e"/><rect x="1235.42" y="352.00" width="1.80" height="10.00" fill="#4e4e4e"/><rect x="1235.42" y="384.00" width="1.80" height="10.00" fill="#4e4e4e"/><rect x="1235.42" y="415.60" width="1.80" height="9.60" fill="#4e4e4e"/><rect x="241.00" y="297.90" width="1.50" height="127.30" fill="#b8b8b8"/><path d="M241 298.2H247.2L241 305.4Z" fill="#fff"/><rect x="137.80" y="330.00" width="103.00" height="31.10" fill="#282830" stroke="#737373" stroke-width="1.3"/><rect x="243.40" y="334.20" width="48.80" height="23.20" rx="4" fill="#555"/><rect x="137.80" y="361.30" width="103.00" height="31.60" fill="#282830" stroke="#737373" stroke-width="1.3"/><rect x="243.40" y="365.50" width="48.80" height="23.70" rx="4" fill="#555"/><rect x="137.80" y="393.10" width="103.00" height="31.50" fill="#282830" stroke="#737373" stroke-width="1.3"/><rect x="243.40" y="397.30" width="48.80" height="23.60" rx="4" fill="#555"/><clipPath id="kc"><rect x="137.2" y="425.1" width="104" height="456.19999999999993"/></clipPath><g clip-path="url(#kc)"><rect x="137.20" y="420.10" width="104.00" height="466.20" fill="#fff"/><rect x="200.00" y="429.66" width="41.20" height="1.90" fill="#0a0a10"/><path d="M241.3 427.41L237.4 430.61L241.3 433.81Z" fill="#0a0a10"/><path d="M130.00 423.64H199.30A3 3 0 0 1 202.30 426.64V448.80A3 3 0 0 1 199.30 451.80H130.00V423.64Z" fill="#000"/><rect x="137.20" y="479.81" width="104.00" height="1.90" fill="#0a0a10"/><path d="M241.3 477.56L237.4 480.76L241.3 483.96Z" fill="#0a0a10"/><rect x="200.00" y="529.96" width="41.20" height="1.90" fill="#0a0a10"/><path d="M241.3 527.71L237.4 530.91L241.3 534.12Z" fill="#0a0a10"/><path d="M130.00 509.62H199.30A3 3 0 0 1 202.30 512.62V534.78A3 3 0 0 1 199.30 537.78H130.00V509.62Z" fill="#000"/><rect x="200.00" y="572.95" width="41.20" height="1.90" fill="#0a0a10"/><path d="M241.3 570.70L237.4 573.90L241.3 577.11Z" fill="#0a0a10"/><path d="M130.00 566.94H199.30A3 3 0 0 1 202.30 569.94V592.10A3 3 0 0 1 199.30 595.10H130.00V566.94Z" fill="#000"/><rect x="137.20" y="623.11" width="104.00" height="1.90" fill="#0a0a10"/><path d="M241.3 620.86L237.4 624.06L241.3 627.26Z" fill="#0a0a10"/><rect x="200.00" y="673.26" width="41.20" height="1.90" fill="#0a0a10"/><path d="M241.3 671.01L237.4 674.22L241.3 677.42Z" fill="#0a0a10"/><path d="M130.00 652.92H199.30A3 3 0 0 1 202.30 655.92V678.08A3 3 0 0 1 199.30 681.08H130.00V652.92Z" fill="#000"/><rect x="200.00" y="723.42" width="41.20" height="1.90" fill="#0a0a10"/><path d="M241.3 721.17L237.4 724.37L241.3 727.57Z" fill="#0a0a10"/><path d="M130.00 710.24H199.30A3 3 0 0 1 202.30 713.24V735.40A3 3 0 0 1 199.30 738.40H130.00V710.24Z" fill="#000"/><rect x="200.00" y="773.57" width="41.20" height="1.90" fill="#0a0a10"/><path d="M241.3 771.32L237.4 774.52L241.3 777.73Z" fill="#0a0a10"/><path d="M130.00 767.56H199.30A3 3 0 0 1 202.30 770.56V792.72A3 3 0 0 1 199.30 795.72H130.00V767.56Z" fill="#000"/><rect x="137.20" y="823.73" width="104.00" height="1.90" fill="#0a0a10"/><path d="M241.3 821.48L237.4 824.68L241.3 827.88Z" fill="#0a0a10"/><rect x="200.00" y="873.88" width="41.20" height="1.90" fill="#0a0a10"/><path d="M241.3 871.63L237.4 874.83L241.3 878.03Z" fill="#0a0a10"/><path d="M130.00 853.54H199.30A3 3 0 0 1 202.30 856.54V878.70A3 3 0 0 1 199.30 881.70H130.00V853.54Z" fill="#000"/><rect x="202.80" y="481.40" width="38.40" height="27.20" fill="#f0f0f0"/></g><rect x="241.20" y="425.10" width="1.40" height="456.20" fill="#0a0a10"/><path d="M1262.6 440.1L1269.6 430.2L1276.6 440.1Z" fill="#ee8000"/><rect x="1261.40" y="538.00" width="16.00" height="34.60" rx="6" fill="#ee8000"/><path d="M1262.6 643.6H1276.8L1269.7 653.8Z" fill="#ee8000"/><g stroke="#dcdcdc" fill="none" stroke-linecap="round"><circle cx="1268.3" cy="667.4" r="6.0" stroke-width="1.6"/><path d="M1272.80 671.90L1276.50 675.70" stroke-width="1.9"/><path d="M1265.30 667.4H1271.30" stroke-width="2"/></g><rect x="1266.90" y="687.00" width="5.10" height="166.70" fill="#555"/><rect x="1261.20" y="767.60" width="16.20" height="5.50" fill="#ee8000"/><g stroke="#dcdcdc" fill="none" stroke-linecap="round"><circle cx="1268.3" cy="872" r="6.0" stroke-width="1.6"/><path d="M1272.80 876.50L1276.50 880.30" stroke-width="1.9"/><path d="M1265.30 872H1271.30" stroke-width="2"/><path d="M1268.3 869.00V875.00" stroke-width="2"/></g><path d="M256.3 884.5V898.1L245.7 891.3Z" fill="#ee8000"/><rect x="263.20" y="883.30" width="57.10" height="15.80" rx="6.5" fill="#ee8000"/><path d="M1021.9 884V898.3L1032.8 891.15Z" fill="#ee8000"/><g stroke="#dcdcdc" fill="none" stroke-linecap="round"><circle cx="1045.5" cy="890.2" r="6.0" stroke-width="1.6"/><path d="M1050.00 894.70L1053.70 898.50" stroke-width="1.9"/><path d="M1042.50 890.2H1048.50" stroke-width="2"/></g><rect x="1065.00" y="888.40" width="167.30" height="5.20" fill="#555"/><rect x="1146.10" y="883.00" width="5.30" height="16.40" fill="#ee8000"/><g stroke="#dcdcdc" fill="none" stroke-linecap="round"><circle cx="1250" cy="890.2" r="6.0" stroke-width="1.6"/><path d="M1254.50 894.70L1258.20 898.50" stroke-width="1.9"/><path d="M1247.00 890.2H1253.00" stroke-width="2"/><path d="M1250 887.20V893.20" stroke-width="2"/></g></svg>
<span class="t lbl" style="left:47.94px;top:26.10px;font-size:13px;line-height:13px;height:13px;color:#fff;">TEMPO</span>
<span class="t" style="left:37.73px;top:49.34px;font-size:21.5px;line-height:21.5px;height:21.5px;color:#fff;">120.00</span>
<span class="t lbl" style="left:54.03px;top:87.27px;font-size:13px;line-height:13px;height:13px;color:#fff;">BEAT</span>
<span class="t" style="left:56.17px;top:110.20px;font-size:21.5px;line-height:21.5px;height:21.5px;color:#fff;">4/4</span>
<span class="t lbl" style="left:46.41px;top:148.10px;font-size:13px;line-height:13px;height:13px;color:#fff;">TUNING</span>
<span class="t" style="left:28.34px;top:171.35px;font-size:21.5px;line-height:21.5px;height:21.5px;color:#fff;">440.0 Hz</span>
<span class="t lbl" style="left:37.68px;top:208.10px;font-size:13px;line-height:13px;height:13px;color:#fff;">QUANTIZE</span>
<span class="t" style="left:20.11px;top:236.23px;font-size:18px;line-height:18px;height:18px;color:#fff;">1/16</span>
<span class="t f-dv" style="left:213.87px;top:15.77px;font-size:29px;line-height:29px;height:29px;color:#111;transform:scaleX(0.7006);-webkit-text-stroke:0.9px #111;">♯</span>
<span class="t f-dv" style="left:222.40px;top:22.17px;font-size:25.8px;line-height:25.8px;height:25.8px;color:#111;transform:scaleX(0.9044);-webkit-text-stroke:0.4px #111;">♭</span>
<span class="t f-serifi" style="left:246.43px;top:15.21px;font-size:21.6px;line-height:21.6px;height:21.6px;color:#111;transform:scaleX(1.7076);-webkit-text-stroke:0.5px #111;">f</span>
<span class="t f-serifi" style="left:258.25px;top:21.78px;font-size:21.4px;line-height:21.4px;height:21.4px;color:#111;transform:scaleX(1.1285);-webkit-text-stroke:0.5px #111;">p</span>
<span class="t" style="left:312.28px;top:25.91px;font-size:17px;line-height:17px;height:17px;color:#111;transform:scaleX(1.0435);">NOTE</span>
<span class="t" style="left:438.73px;top:26.51px;font-size:17px;line-height:17px;height:17px;color:#fff;transform:scaleX(1.0688);">TMG</span>
<span class="t" style="left:565.13px;top:26.47px;font-size:17px;line-height:17px;height:17px;color:#fff;transform:scaleX(1.0298);">VOL</span>
<span class="t" style="left:690.40px;top:26.65px;font-size:17px;line-height:17px;height:17px;color:#fff;transform:scaleX(1.0714);">PIT</span>
<span class="t" style="left:816.65px;top:27.04px;font-size:17px;line-height:17px;height:17px;color:#fff;transform:scaleX(1.0630);">VIB</span>
<span class="t" style="left:942.64px;top:27.04px;font-size:17px;line-height:17px;height:17px;color:#fff;transform:scaleX(1.0422);">ALP</span>
<span class="t" style="left:1068.99px;top:26.51px;font-size:17px;line-height:17px;height:17px;color:#fff;transform:scaleX(1.0668);">HUS</span>
<span class="t" style="left:1198.08px;top:21.73px;font-size:19.6px;line-height:19.6px;height:19.6px;color:#fff;transform:scaleX(0.9828);">Aa</span>
<span class="t" style="left:640.78px;top:320.91px;font-size:18px;line-height:18px;height:18px;color:#fff;">d,o</span>
<span class="t" style="left:640.49px;top:354.41px;font-size:14px;line-height:14px;height:14px;color:#111;transform:scaleX(1.1180);">ド</span>
<span class="t" style="left:246.45px;top:60.22px;font-size:17px;line-height:17px;height:17px;color:#fff;">1</span>
<span class="t" style="left:644.96px;top:60.12px;font-size:17px;line-height:17px;height:17px;color:#fff;">2</span>
<span class="t" style="left:1043.01px;top:60.06px;font-size:17px;line-height:17px;height:17px;color:#fff;">3</span>
<span class="t" style="left:264.08px;top:57.21px;font-size:14px;line-height:14px;height:14px;color:#ee8000;font-weight:700;">B</span>
<span class="t" style="left:179.34px;top:89.84px;font-size:17.6px;line-height:17.6px;height:17.6px;color:#fff;transform:scaleX(1.0107);">Tempo</span>
<span class="t" style="left:247.15px;top:90.12px;font-size:17.6px;line-height:17.6px;height:17.6px;color:#fff;transform:scaleX(0.9153);">120.0</span>
<span class="t" style="left:201.52px;top:121.76px;font-size:17.6px;line-height:17.6px;height:17.6px;color:#fff;transform:scaleX(1.0293);">Key</span>
<span class="t" style="left:247.72px;top:121.95px;font-size:17.6px;line-height:17.6px;height:17.6px;color:#fff;">C</span>
<span class="t" style="left:154.36px;top:153.26px;font-size:17.6px;line-height:17.6px;height:17.6px;color:#fff;transform:scaleX(1.0221);">Dynamics</span>
<span class="t" style="left:246.96px;top:153.83px;font-size:17.6px;line-height:17.6px;height:17.6px;color:#fff;">N</span>
<span class="t" style="left:210.47px;top:236.98px;font-size:18px;line-height:18px;height:18px;color:#222;">E4</span>
<span class="t f-serif" style="left:211.16px;top:351.68px;font-size:18.4px;line-height:18.4px;height:18.4px;color:#111;">C4</span>
</section>
<div id="quantize-menu" class="menu" role="listbox" aria-label="Quantize" style="left:10px;top:514px;width:156px;height:300px">
<svg class="g" width="156" height="300" viewBox="10 514 156 300"><rect x="10.70" y="514.90" width="152.70" height="296.50" fill="#282830" stroke="#8a8a8a" stroke-width="1.3"/><rect x="11.40" y="723.29" width="151.20" height="26.60" fill="#ee8000"/></svg>
<div class="t mi" style="left:27.65px;top:12.43px;font-size:14px;line-height:14px;height:14px;color:#fff;font-weight:500;">1/1</div>
<div class="t mi" style="left:27.71px;top:41.72px;font-size:14px;line-height:14px;height:14px;color:#fff;font-weight:500;">1/2</div>
<div class="t mi" style="left:27.27px;top:69.80px;font-size:14px;line-height:14px;height:14px;color:#fff;font-weight:500;transform:scaleX(1.0457);">1/2(三連符)</div>
<div class="t mi" style="left:27.74px;top:99.97px;font-size:14px;line-height:14px;height:14px;color:#fff;font-weight:500;">1/4</div>
<div class="t mi" style="left:27.27px;top:128.18px;font-size:14px;line-height:14px;height:14px;color:#fff;font-weight:500;transform:scaleX(1.0457);">1/4(三連符)</div>
<div class="t mi" style="left:27.77px;top:158.29px;font-size:14px;line-height:14px;height:14px;color:#fff;font-weight:500;">1/8</div>
<div class="t mi" style="left:27.27px;top:186.56px;font-size:14px;line-height:14px;height:14px;color:#fff;font-weight:500;transform:scaleX(1.0457);">1/8(三連符)</div>
<span class="t f-dv" style="left:9.56px;top:214.19px;font-size:17.5px;line-height:17.5px;height:17.5px;color:#fff;font-weight:700;transform:scaleX(1.1209);-webkit-text-stroke:0.7px #fff;">✓</span>
<div class="t mi" style="left:27.75px;top:216.44px;font-size:14px;line-height:14px;height:14px;color:#fff;font-weight:500;">1/16</div>
<div class="t mi" style="left:27.92px;top:245.25px;font-size:14px;line-height:14px;height:14px;color:#fff;font-weight:500;transform:scaleX(1.0360);">1/16(三連符)</div>
<div class="t mi" style="left:27.66px;top:275.24px;font-size:14px;line-height:14px;height:14px;color:#fff;font-weight:500;">1/32</div>
</div>
<div id="focus-ring"><svg class="g" width="146" height="62" viewBox="-2 465 146 62"><rect x="2.1" y="471" width="135.8" height="50.3" rx="8.5" fill="none" stroke="#ff0000" stroke-width="4.2"/></svg></div>
</body></html>
